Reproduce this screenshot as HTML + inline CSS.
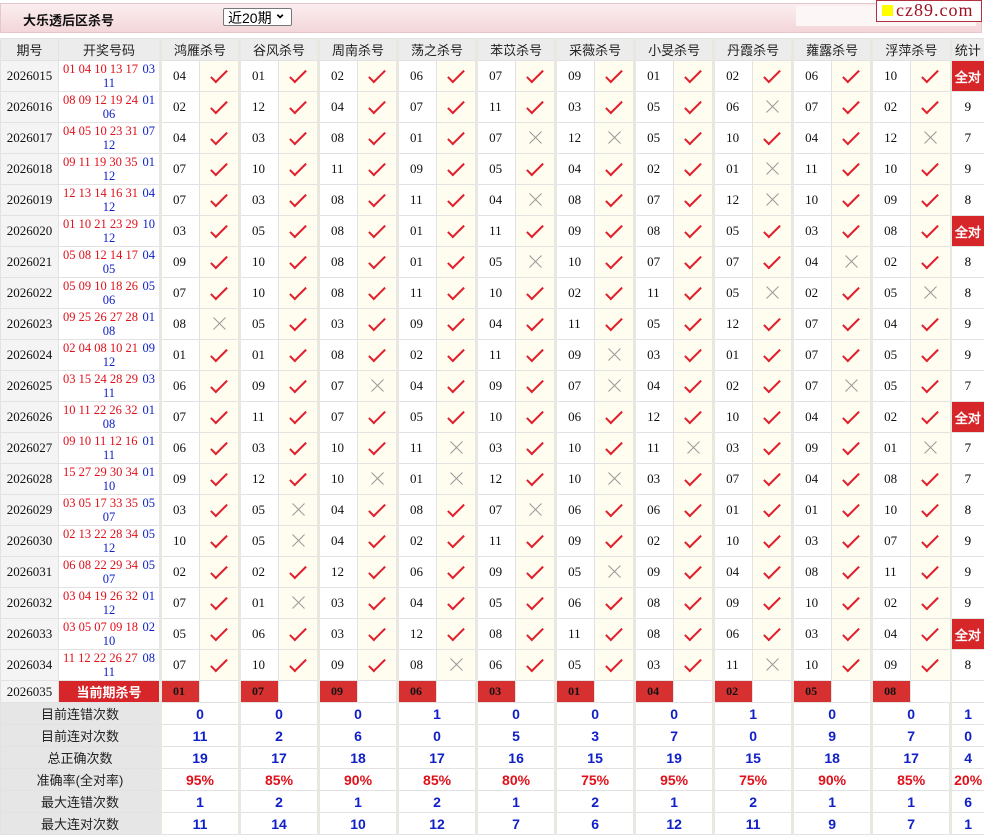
<!DOCTYPE html><html><head><meta charset="utf-8"><style>
body{margin:0;width:984px;height:837px;background:#fff;font-family:"Liberation Sans","Noto Sans CJK SC",sans-serif;position:relative;overflow:hidden}
.top{position:absolute;left:0;top:3px;width:980px;height:28px;background:linear-gradient(#fbeef0,#f3d6d9);border:1px solid #e6c8cb}
.top b{position:absolute;left:22px;top:6px;font-size:13px;color:#111}
.sel{position:absolute;left:222px;top:4px;width:69px;height:18px;border:1px solid #777;background:#fff;font-size:14px;line-height:18px;padding-left:4px;box-sizing:border-box;border-radius:2px}
.sel:after{content:"⌄";position:absolute;right:5px;top:-5px;font-weight:bold}
.wb{position:absolute;left:795px;top:2px;width:180px;height:20px;background:#fdf6f6}
.logo{position:absolute;left:876px;top:0px;width:104px;height:20px;border:1px solid #b03040;background:#fff;font-family:"Liberation Serif",serif;font-size:18px;line-height:19px;color:#a01020;letter-spacing:1px}
.logo i{display:inline-block;width:11px;height:11px;background:#ff0;margin:0 3px 0 5px}
table{position:absolute;left:0;top:38px;width:984px;border-collapse:collapse;table-layout:fixed}
td,th{border:1px solid #e2e2e2;padding:0;text-align:center;font-size:13px;overflow:hidden}
th{background:#ececec;font-weight:normal;height:21px;color:#222}
tr.d td{height:30px}
td.p{background:#f4f4f4;font-family:"Liberation Serif",serif;font-size:13px;color:#111}
td.h{font-family:"Liberation Serif",serif;line-height:14px;padding:0 4px 0 4px;font-size:12.5px;white-space:nowrap}
td.h div{display:flex;justify-content:space-between;text-align:left;white-space:nowrap}
.r{color:#e0101a}.bl{color:#1020c8}
td.n{font-family:"Liberation Serif",serif;text-align:left;padding-left:11px;border-left:3px solid #e8e8e0;color:#111}
th.g,td.g{border-left:3px solid #e8e8e0}
td.k{background:#fffdf0}
td.s{font-family:"Liberation Serif",serif;border-left:2px solid #e8e8e0}
.c{display:inline-block;width:6px;height:15px;border-right:2px solid #e0202c;border-bottom:2px solid #e0202c;transform:rotate(45deg);margin-top:-6px;vertical-align:middle}
.x{display:inline-block;width:16px;height:16px;position:relative;vertical-align:middle}
.x:before,.x:after{content:"";position:absolute;left:0;top:7px;width:17px;height:1px;background:#999;transform:rotate(45deg)}
.x:after{transform:rotate(-45deg)}
.all{background:#d6262a;color:#fff;font-weight:bold;font-size:13px}
tr.cur td{height:21px}
.cv{background:#d63030;color:#fff;font-weight:bold;font-family:"Liberation Serif",serif;font-size:12px}
tr.st td{height:21px;font-weight:bold;font-size:14px;color:#1020c8}
tr.st td.l{background:#e6e6e6;font-weight:normal;font-size:13px;color:#222}
tr.st td.rr{color:#e0101a}
</style></head><body>
<div class="top"><b>大乐透后区杀号</b><div class="sel">近20期</div><div class="wb"></div></div>
<div class="logo"><i></i>cz89.com</div>
<table>
<colgroup><col style="width:58px"><col style="width:102px"><col style="width:39px"><col style="width:40px"><col style="width:39px"><col style="width:40px"><col style="width:39px"><col style="width:40px"><col style="width:39px"><col style="width:40px"><col style="width:39px"><col style="width:40px"><col style="width:39px"><col style="width:40px"><col style="width:39px"><col style="width:40px"><col style="width:39px"><col style="width:40px"><col style="width:39px"><col style="width:40px"><col style="width:39px"><col style="width:40px"><col style="width:34px"></colgroup>
<tr><th>期号</th><th>开奖号码</th><th class="g" colspan="2">鸿雁杀号</th><th class="g" colspan="2">谷风杀号</th><th class="g" colspan="2">周南杀号</th><th class="g" colspan="2">荡之杀号</th><th class="g" colspan="2">苯苡杀号</th><th class="g" colspan="2">采薇杀号</th><th class="g" colspan="2">小旻杀号</th><th class="g" colspan="2">丹霞杀号</th><th class="g" colspan="2">蕹露杀号</th><th class="g" colspan="2">浮萍杀号</th><th style="border-left:2px solid #e8e8e0">统计</th></tr>
<tr class="d"><td class="p">2026015</td><td class="h"><div><span class="r">01 04 10 13 17</span><span class="bl">03</span></div><span class="bl">11</span></td><td class="n">04</td><td class="k"><i class="c"></i></td><td class="n">01</td><td class="k"><i class="c"></i></td><td class="n">02</td><td class="k"><i class="c"></i></td><td class="n">06</td><td class="k"><i class="c"></i></td><td class="n">07</td><td class="k"><i class="c"></i></td><td class="n">09</td><td class="k"><i class="c"></i></td><td class="n">01</td><td class="k"><i class="c"></i></td><td class="n">02</td><td class="k"><i class="c"></i></td><td class="n">06</td><td class="k"><i class="c"></i></td><td class="n">10</td><td class="k"><i class="c"></i></td><td class="s all">全对</td></tr>
<tr class="d"><td class="p">2026016</td><td class="h"><div><span class="r">08 09 12 19 24</span><span class="bl">01</span></div><span class="bl">06</span></td><td class="n">02</td><td class="k"><i class="c"></i></td><td class="n">12</td><td class="k"><i class="c"></i></td><td class="n">04</td><td class="k"><i class="c"></i></td><td class="n">07</td><td class="k"><i class="c"></i></td><td class="n">11</td><td class="k"><i class="c"></i></td><td class="n">03</td><td class="k"><i class="c"></i></td><td class="n">05</td><td class="k"><i class="c"></i></td><td class="n">06</td><td class="k"><i class="x"></i></td><td class="n">07</td><td class="k"><i class="c"></i></td><td class="n">02</td><td class="k"><i class="c"></i></td><td class="s">9</td></tr>
<tr class="d"><td class="p">2026017</td><td class="h"><div><span class="r">04 05 10 23 31</span><span class="bl">07</span></div><span class="bl">12</span></td><td class="n">04</td><td class="k"><i class="c"></i></td><td class="n">03</td><td class="k"><i class="c"></i></td><td class="n">08</td><td class="k"><i class="c"></i></td><td class="n">01</td><td class="k"><i class="c"></i></td><td class="n">07</td><td class="k"><i class="x"></i></td><td class="n">12</td><td class="k"><i class="x"></i></td><td class="n">05</td><td class="k"><i class="c"></i></td><td class="n">10</td><td class="k"><i class="c"></i></td><td class="n">04</td><td class="k"><i class="c"></i></td><td class="n">12</td><td class="k"><i class="x"></i></td><td class="s">7</td></tr>
<tr class="d"><td class="p">2026018</td><td class="h"><div><span class="r">09 11 19 30 35</span><span class="bl">01</span></div><span class="bl">12</span></td><td class="n">07</td><td class="k"><i class="c"></i></td><td class="n">10</td><td class="k"><i class="c"></i></td><td class="n">11</td><td class="k"><i class="c"></i></td><td class="n">09</td><td class="k"><i class="c"></i></td><td class="n">05</td><td class="k"><i class="c"></i></td><td class="n">04</td><td class="k"><i class="c"></i></td><td class="n">02</td><td class="k"><i class="c"></i></td><td class="n">01</td><td class="k"><i class="x"></i></td><td class="n">11</td><td class="k"><i class="c"></i></td><td class="n">10</td><td class="k"><i class="c"></i></td><td class="s">9</td></tr>
<tr class="d"><td class="p">2026019</td><td class="h"><div><span class="r">12 13 14 16 31</span><span class="bl">04</span></div><span class="bl">12</span></td><td class="n">07</td><td class="k"><i class="c"></i></td><td class="n">03</td><td class="k"><i class="c"></i></td><td class="n">08</td><td class="k"><i class="c"></i></td><td class="n">11</td><td class="k"><i class="c"></i></td><td class="n">04</td><td class="k"><i class="x"></i></td><td class="n">08</td><td class="k"><i class="c"></i></td><td class="n">07</td><td class="k"><i class="c"></i></td><td class="n">12</td><td class="k"><i class="x"></i></td><td class="n">10</td><td class="k"><i class="c"></i></td><td class="n">09</td><td class="k"><i class="c"></i></td><td class="s">8</td></tr>
<tr class="d"><td class="p">2026020</td><td class="h"><div><span class="r">01 10 21 23 29</span><span class="bl">10</span></div><span class="bl">12</span></td><td class="n">03</td><td class="k"><i class="c"></i></td><td class="n">05</td><td class="k"><i class="c"></i></td><td class="n">08</td><td class="k"><i class="c"></i></td><td class="n">01</td><td class="k"><i class="c"></i></td><td class="n">11</td><td class="k"><i class="c"></i></td><td class="n">09</td><td class="k"><i class="c"></i></td><td class="n">08</td><td class="k"><i class="c"></i></td><td class="n">05</td><td class="k"><i class="c"></i></td><td class="n">03</td><td class="k"><i class="c"></i></td><td class="n">08</td><td class="k"><i class="c"></i></td><td class="s all">全对</td></tr>
<tr class="d"><td class="p">2026021</td><td class="h"><div><span class="r">05 08 12 14 17</span><span class="bl">04</span></div><span class="bl">05</span></td><td class="n">09</td><td class="k"><i class="c"></i></td><td class="n">10</td><td class="k"><i class="c"></i></td><td class="n">08</td><td class="k"><i class="c"></i></td><td class="n">01</td><td class="k"><i class="c"></i></td><td class="n">05</td><td class="k"><i class="x"></i></td><td class="n">10</td><td class="k"><i class="c"></i></td><td class="n">07</td><td class="k"><i class="c"></i></td><td class="n">07</td><td class="k"><i class="c"></i></td><td class="n">04</td><td class="k"><i class="x"></i></td><td class="n">02</td><td class="k"><i class="c"></i></td><td class="s">8</td></tr>
<tr class="d"><td class="p">2026022</td><td class="h"><div><span class="r">05 09 10 18 26</span><span class="bl">05</span></div><span class="bl">06</span></td><td class="n">07</td><td class="k"><i class="c"></i></td><td class="n">10</td><td class="k"><i class="c"></i></td><td class="n">08</td><td class="k"><i class="c"></i></td><td class="n">11</td><td class="k"><i class="c"></i></td><td class="n">10</td><td class="k"><i class="c"></i></td><td class="n">02</td><td class="k"><i class="c"></i></td><td class="n">11</td><td class="k"><i class="c"></i></td><td class="n">05</td><td class="k"><i class="x"></i></td><td class="n">02</td><td class="k"><i class="c"></i></td><td class="n">05</td><td class="k"><i class="x"></i></td><td class="s">8</td></tr>
<tr class="d"><td class="p">2026023</td><td class="h"><div><span class="r">09 25 26 27 28</span><span class="bl">01</span></div><span class="bl">08</span></td><td class="n">08</td><td class="k"><i class="x"></i></td><td class="n">05</td><td class="k"><i class="c"></i></td><td class="n">03</td><td class="k"><i class="c"></i></td><td class="n">09</td><td class="k"><i class="c"></i></td><td class="n">04</td><td class="k"><i class="c"></i></td><td class="n">11</td><td class="k"><i class="c"></i></td><td class="n">05</td><td class="k"><i class="c"></i></td><td class="n">12</td><td class="k"><i class="c"></i></td><td class="n">07</td><td class="k"><i class="c"></i></td><td class="n">04</td><td class="k"><i class="c"></i></td><td class="s">9</td></tr>
<tr class="d"><td class="p">2026024</td><td class="h"><div><span class="r">02 04 08 10 21</span><span class="bl">09</span></div><span class="bl">12</span></td><td class="n">01</td><td class="k"><i class="c"></i></td><td class="n">01</td><td class="k"><i class="c"></i></td><td class="n">08</td><td class="k"><i class="c"></i></td><td class="n">02</td><td class="k"><i class="c"></i></td><td class="n">11</td><td class="k"><i class="c"></i></td><td class="n">09</td><td class="k"><i class="x"></i></td><td class="n">03</td><td class="k"><i class="c"></i></td><td class="n">01</td><td class="k"><i class="c"></i></td><td class="n">07</td><td class="k"><i class="c"></i></td><td class="n">05</td><td class="k"><i class="c"></i></td><td class="s">9</td></tr>
<tr class="d"><td class="p">2026025</td><td class="h"><div><span class="r">03 15 24 28 29</span><span class="bl">03</span></div><span class="bl">11</span></td><td class="n">06</td><td class="k"><i class="c"></i></td><td class="n">09</td><td class="k"><i class="c"></i></td><td class="n">07</td><td class="k"><i class="x"></i></td><td class="n">04</td><td class="k"><i class="c"></i></td><td class="n">09</td><td class="k"><i class="c"></i></td><td class="n">07</td><td class="k"><i class="x"></i></td><td class="n">04</td><td class="k"><i class="c"></i></td><td class="n">02</td><td class="k"><i class="c"></i></td><td class="n">07</td><td class="k"><i class="x"></i></td><td class="n">05</td><td class="k"><i class="c"></i></td><td class="s">7</td></tr>
<tr class="d"><td class="p">2026026</td><td class="h"><div><span class="r">10 11 22 26 32</span><span class="bl">01</span></div><span class="bl">08</span></td><td class="n">07</td><td class="k"><i class="c"></i></td><td class="n">11</td><td class="k"><i class="c"></i></td><td class="n">07</td><td class="k"><i class="c"></i></td><td class="n">05</td><td class="k"><i class="c"></i></td><td class="n">10</td><td class="k"><i class="c"></i></td><td class="n">06</td><td class="k"><i class="c"></i></td><td class="n">12</td><td class="k"><i class="c"></i></td><td class="n">10</td><td class="k"><i class="c"></i></td><td class="n">04</td><td class="k"><i class="c"></i></td><td class="n">02</td><td class="k"><i class="c"></i></td><td class="s all">全对</td></tr>
<tr class="d"><td class="p">2026027</td><td class="h"><div><span class="r">09 10 11 12 16</span><span class="bl">01</span></div><span class="bl">11</span></td><td class="n">06</td><td class="k"><i class="c"></i></td><td class="n">03</td><td class="k"><i class="c"></i></td><td class="n">10</td><td class="k"><i class="c"></i></td><td class="n">11</td><td class="k"><i class="x"></i></td><td class="n">03</td><td class="k"><i class="c"></i></td><td class="n">10</td><td class="k"><i class="c"></i></td><td class="n">11</td><td class="k"><i class="x"></i></td><td class="n">03</td><td class="k"><i class="c"></i></td><td class="n">09</td><td class="k"><i class="c"></i></td><td class="n">01</td><td class="k"><i class="x"></i></td><td class="s">7</td></tr>
<tr class="d"><td class="p">2026028</td><td class="h"><div><span class="r">15 27 29 30 34</span><span class="bl">01</span></div><span class="bl">10</span></td><td class="n">09</td><td class="k"><i class="c"></i></td><td class="n">12</td><td class="k"><i class="c"></i></td><td class="n">10</td><td class="k"><i class="x"></i></td><td class="n">01</td><td class="k"><i class="x"></i></td><td class="n">12</td><td class="k"><i class="c"></i></td><td class="n">10</td><td class="k"><i class="x"></i></td><td class="n">03</td><td class="k"><i class="c"></i></td><td class="n">07</td><td class="k"><i class="c"></i></td><td class="n">04</td><td class="k"><i class="c"></i></td><td class="n">08</td><td class="k"><i class="c"></i></td><td class="s">7</td></tr>
<tr class="d"><td class="p">2026029</td><td class="h"><div><span class="r">03 05 17 33 35</span><span class="bl">05</span></div><span class="bl">07</span></td><td class="n">03</td><td class="k"><i class="c"></i></td><td class="n">05</td><td class="k"><i class="x"></i></td><td class="n">04</td><td class="k"><i class="c"></i></td><td class="n">08</td><td class="k"><i class="c"></i></td><td class="n">07</td><td class="k"><i class="x"></i></td><td class="n">06</td><td class="k"><i class="c"></i></td><td class="n">06</td><td class="k"><i class="c"></i></td><td class="n">01</td><td class="k"><i class="c"></i></td><td class="n">01</td><td class="k"><i class="c"></i></td><td class="n">10</td><td class="k"><i class="c"></i></td><td class="s">8</td></tr>
<tr class="d"><td class="p">2026030</td><td class="h"><div><span class="r">02 13 22 28 34</span><span class="bl">05</span></div><span class="bl">12</span></td><td class="n">10</td><td class="k"><i class="c"></i></td><td class="n">05</td><td class="k"><i class="x"></i></td><td class="n">04</td><td class="k"><i class="c"></i></td><td class="n">02</td><td class="k"><i class="c"></i></td><td class="n">11</td><td class="k"><i class="c"></i></td><td class="n">09</td><td class="k"><i class="c"></i></td><td class="n">02</td><td class="k"><i class="c"></i></td><td class="n">10</td><td class="k"><i class="c"></i></td><td class="n">03</td><td class="k"><i class="c"></i></td><td class="n">07</td><td class="k"><i class="c"></i></td><td class="s">9</td></tr>
<tr class="d"><td class="p">2026031</td><td class="h"><div><span class="r">06 08 22 29 34</span><span class="bl">05</span></div><span class="bl">07</span></td><td class="n">02</td><td class="k"><i class="c"></i></td><td class="n">02</td><td class="k"><i class="c"></i></td><td class="n">12</td><td class="k"><i class="c"></i></td><td class="n">06</td><td class="k"><i class="c"></i></td><td class="n">09</td><td class="k"><i class="c"></i></td><td class="n">05</td><td class="k"><i class="x"></i></td><td class="n">09</td><td class="k"><i class="c"></i></td><td class="n">04</td><td class="k"><i class="c"></i></td><td class="n">08</td><td class="k"><i class="c"></i></td><td class="n">11</td><td class="k"><i class="c"></i></td><td class="s">9</td></tr>
<tr class="d"><td class="p">2026032</td><td class="h"><div><span class="r">03 04 19 26 32</span><span class="bl">01</span></div><span class="bl">12</span></td><td class="n">07</td><td class="k"><i class="c"></i></td><td class="n">01</td><td class="k"><i class="x"></i></td><td class="n">03</td><td class="k"><i class="c"></i></td><td class="n">04</td><td class="k"><i class="c"></i></td><td class="n">05</td><td class="k"><i class="c"></i></td><td class="n">06</td><td class="k"><i class="c"></i></td><td class="n">08</td><td class="k"><i class="c"></i></td><td class="n">09</td><td class="k"><i class="c"></i></td><td class="n">10</td><td class="k"><i class="c"></i></td><td class="n">02</td><td class="k"><i class="c"></i></td><td class="s">9</td></tr>
<tr class="d"><td class="p">2026033</td><td class="h"><div><span class="r">03 05 07 09 18</span><span class="bl">02</span></div><span class="bl">10</span></td><td class="n">05</td><td class="k"><i class="c"></i></td><td class="n">06</td><td class="k"><i class="c"></i></td><td class="n">03</td><td class="k"><i class="c"></i></td><td class="n">12</td><td class="k"><i class="c"></i></td><td class="n">08</td><td class="k"><i class="c"></i></td><td class="n">11</td><td class="k"><i class="c"></i></td><td class="n">08</td><td class="k"><i class="c"></i></td><td class="n">06</td><td class="k"><i class="c"></i></td><td class="n">03</td><td class="k"><i class="c"></i></td><td class="n">04</td><td class="k"><i class="c"></i></td><td class="s all">全对</td></tr>
<tr class="d"><td class="p">2026034</td><td class="h"><div><span class="r">11 12 22 26 27</span><span class="bl">08</span></div><span class="bl">11</span></td><td class="n">07</td><td class="k"><i class="c"></i></td><td class="n">10</td><td class="k"><i class="c"></i></td><td class="n">09</td><td class="k"><i class="c"></i></td><td class="n">08</td><td class="k"><i class="x"></i></td><td class="n">06</td><td class="k"><i class="c"></i></td><td class="n">05</td><td class="k"><i class="c"></i></td><td class="n">03</td><td class="k"><i class="c"></i></td><td class="n">11</td><td class="k"><i class="x"></i></td><td class="n">10</td><td class="k"><i class="c"></i></td><td class="n">09</td><td class="k"><i class="c"></i></td><td class="s">8</td></tr>
<tr class="cur"><td class="p">2026035</td><td class="all" style="font-size:13px">当前期杀号</td><td class="n cv">01</td><td></td><td class="n cv">07</td><td></td><td class="n cv">09</td><td></td><td class="n cv">06</td><td></td><td class="n cv">03</td><td></td><td class="n cv">01</td><td></td><td class="n cv">04</td><td></td><td class="n cv">02</td><td></td><td class="n cv">05</td><td></td><td class="n cv">08</td><td></td><td class="s"></td></tr>
<tr class="st"><td class="l" colspan="2">目前连错次数</td><td class="g" colspan="2">0</td><td class="g" colspan="2">0</td><td class="g" colspan="2">0</td><td class="g" colspan="2">1</td><td class="g" colspan="2">0</td><td class="g" colspan="2">0</td><td class="g" colspan="2">0</td><td class="g" colspan="2">1</td><td class="g" colspan="2">0</td><td class="g" colspan="2">0</td><td class="g">1</td></tr>
<tr class="st"><td class="l" colspan="2">目前连对次数</td><td class="g" colspan="2">11</td><td class="g" colspan="2">2</td><td class="g" colspan="2">6</td><td class="g" colspan="2">0</td><td class="g" colspan="2">5</td><td class="g" colspan="2">3</td><td class="g" colspan="2">7</td><td class="g" colspan="2">0</td><td class="g" colspan="2">9</td><td class="g" colspan="2">7</td><td class="g">0</td></tr>
<tr class="st"><td class="l" colspan="2">总正确次数</td><td class="g" colspan="2">19</td><td class="g" colspan="2">17</td><td class="g" colspan="2">18</td><td class="g" colspan="2">17</td><td class="g" colspan="2">16</td><td class="g" colspan="2">15</td><td class="g" colspan="2">19</td><td class="g" colspan="2">15</td><td class="g" colspan="2">18</td><td class="g" colspan="2">17</td><td class="g">4</td></tr>
<tr class="st"><td class="l" colspan="2">准确率(全对率)</td><td class="g rr" colspan="2">95%</td><td class="g rr" colspan="2">85%</td><td class="g rr" colspan="2">90%</td><td class="g rr" colspan="2">85%</td><td class="g rr" colspan="2">80%</td><td class="g rr" colspan="2">75%</td><td class="g rr" colspan="2">95%</td><td class="g rr" colspan="2">75%</td><td class="g rr" colspan="2">90%</td><td class="g rr" colspan="2">85%</td><td class="g rr">20%</td></tr>
<tr class="st"><td class="l" colspan="2">最大连错次数</td><td class="g" colspan="2">1</td><td class="g" colspan="2">2</td><td class="g" colspan="2">1</td><td class="g" colspan="2">2</td><td class="g" colspan="2">1</td><td class="g" colspan="2">2</td><td class="g" colspan="2">1</td><td class="g" colspan="2">2</td><td class="g" colspan="2">1</td><td class="g" colspan="2">1</td><td class="g">6</td></tr>
<tr class="st"><td class="l" colspan="2">最大连对次数</td><td class="g" colspan="2">11</td><td class="g" colspan="2">14</td><td class="g" colspan="2">10</td><td class="g" colspan="2">12</td><td class="g" colspan="2">7</td><td class="g" colspan="2">6</td><td class="g" colspan="2">12</td><td class="g" colspan="2">11</td><td class="g" colspan="2">9</td><td class="g" colspan="2">7</td><td class="g">1</td></tr>
</table>
</body></html>
